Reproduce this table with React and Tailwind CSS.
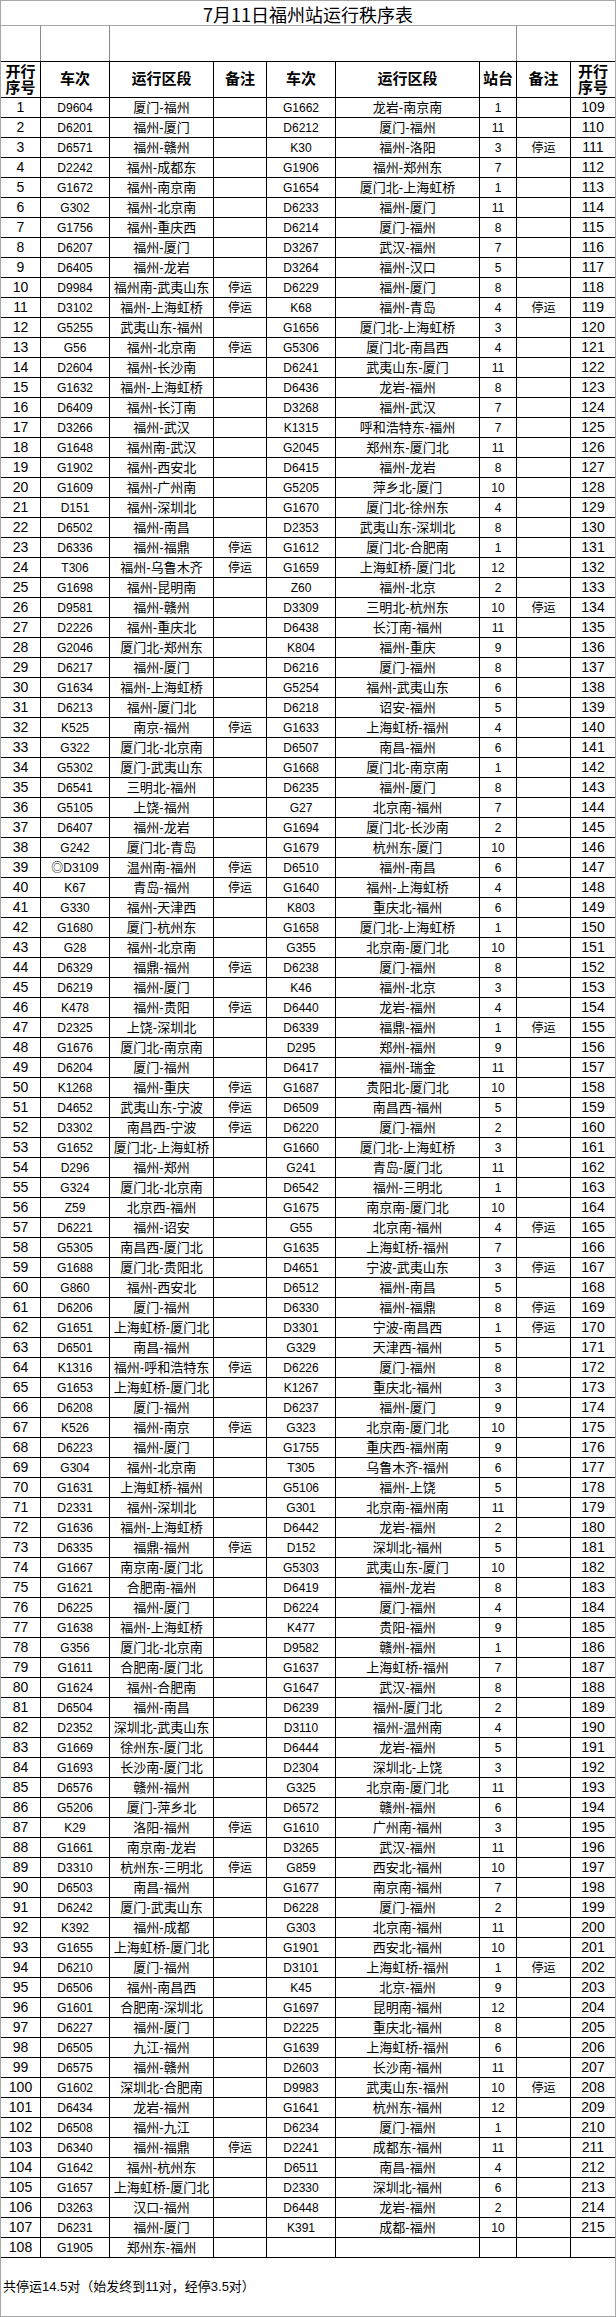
import React from "react";

const raw = `D9604,厦门-福州,,G1662,龙岩-南京南,1,
D6201,福州-厦门,,D6212,厦门-福州,11,
D6571,福州-赣州,,K30,福州-洛阳,3,停运
D2242,福州-成都东,,G1906,福州-郑州东,7,
G1672,福州-南京南,,G1654,厦门北-上海虹桥,1,
G302,福州-北京南,,D6233,福州-厦门,11,
G1756,福州-重庆西,,D6214,厦门-福州,8,
D6207,福州-厦门,,D3267,武汉-福州,7,
D6405,福州-龙岩,,D3264,福州-汉口,5,
D9984,福州南-武夷山东,停运,D6229,福州-厦门,8,
D3102,福州-上海虹桥,停运,K68,福州-青岛,4,停运
G5255,武夷山东-福州,,G1656,厦门北-上海虹桥,3,
G56,福州-北京南,停运,G5306,厦门北-南昌西,4,
D2604,福州-长沙南,,D6241,武夷山东-厦门,11,
G1632,福州-上海虹桥,,D6436,龙岩-福州,8,
D6409,福州-长汀南,,D3268,福州-武汉,7,
D3266,福州-武汉,,K1315,呼和浩特东-福州,7,
G1648,福州南-武汉,,G2045,郑州东-厦门北,11,
G1902,福州-西安北,,D6415,福州-龙岩,8,
G1609,福州-广州南,,G5205,萍乡北-厦门,10,
D151,福州-深圳北,,G1670,厦门北-徐州东,4,
D6502,福州-南昌,,D2353,武夷山东-深圳北,8,
D6336,福州-福鼎,停运,G1612,厦门北-合肥南,1,
T306,福州-乌鲁木齐,停运,G1659,上海虹桥-厦门北,12,
G1698,福州-昆明南,,Z60,福州-北京,2,
D9581,福州-赣州,,D3309,三明北-杭州东,10,停运
D2226,福州-重庆北,,D6438,长汀南-福州,11,
G2046,厦门北-郑州东,,K804,福州-重庆,9,
D6217,福州-厦门,,D6216,厦门-福州,8,
G1634,福州-上海虹桥,,G5254,福州-武夷山东,6,
D6213,福州-厦门北,,D6218,诏安-福州,5,
K525,南京-福州,停运,G1633,上海虹桥-福州,4,
G322,厦门北-北京南,,D6507,南昌-福州,6,
G5302,厦门-武夷山东,,G1668,厦门北-南京南,1,
D6541,三明北-福州,,D6235,福州-厦门,8,
G5105,上饶-福州,,G27,北京南-福州,7,
D6407,福州-龙岩,,G1694,厦门北-长沙南,2,
G242,厦门北-青岛,,G1679,杭州东-厦门,10,
◎D3109,温州南-福州,停运,D6510,福州-南昌,6,
K67,青岛-福州,停运,G1640,福州-上海虹桥,4,
G330,福州-天津西,,K803,重庆北-福州,6,
G1680,厦门-杭州东,,G1658,厦门北-上海虹桥,1,
G28,福州-北京南,,G355,北京南-厦门北,10,
D6329,福鼎-福州,停运,D6238,厦门-福州,8,
D6219,福州-厦门,,K46,福州-北京,3,
K478,福州-贵阳,停运,D6440,龙岩-福州,4,
D2325,上饶-深圳北,,D6339,福鼎-福州,1,停运
G1676,厦门北-南京南,,D295,郑州-福州,9,
D6204,厦门-福州,,D6417,福州-瑞金,11,
K1268,福州-重庆,停运,G1687,贵阳北-厦门北,10,
D4652,武夷山东-宁波,停运,D6509,南昌西-福州,5,
D3302,南昌西-宁波,停运,D6220,厦门-福州,2,
G1652,厦门北-上海虹桥,,G1660,厦门北-上海虹桥,3,
D296,福州-郑州,,G241,青岛-厦门北,11,
G324,厦门北-北京南,,D6542,福州-三明北,1,
Z59,北京西-福州,,G1675,南京南-厦门北,10,
D6221,福州-诏安,,G55,北京南-福州,4,停运
G5305,南昌西-厦门北,,G1635,上海虹桥-福州,7,
G1688,厦门北-贵阳北,,D4651,宁波-武夷山东,3,停运
G860,福州-西安北,,D6512,福州-南昌,5,
D6206,厦门-福州,,D6330,福州-福鼎,8,停运
G1651,上海虹桥-厦门北,,D3301,宁波-南昌西,1,停运
D6501,南昌-福州,,G329,天津西-福州,5,
K1316,福州-呼和浩特东,停运,D6226,厦门-福州,8,
G1653,上海虹桥-厦门北,,K1267,重庆北-福州,3,
D6208,厦门-福州,,D6237,福州-厦门,9,
K526,福州-南京,停运,G323,北京南-厦门北,10,
D6223,福州-厦门,,G1755,重庆西-福州南,9,
G304,福州-北京南,,T305,乌鲁木齐-福州,6,
G1631,上海虹桥-福州,,G5106,福州-上饶,5,
D2331,福州-深圳北,,G301,北京南-福州南,11,
G1636,福州-上海虹桥,,D6442,龙岩-福州,2,
D6335,福鼎-福州,停运,D152,深圳北-福州,5,
G1667,南京南-厦门北,,G5303,武夷山东-厦门,10,
G1621,合肥南-福州,,D6419,福州-龙岩,8,
D6225,福州-厦门,,D6224,厦门-福州,4,
G1638,福州-上海虹桥,,K477,贵阳-福州,9,
G356,厦门北-北京南,,D9582,赣州-福州,1,
G1611,合肥南-厦门北,,G1637,上海虹桥-福州,7,
G1624,福州-合肥南,,G1647,武汉-福州,8,
D6504,福州-南昌,,D6239,福州-厦门北,2,
D2352,深圳北-武夷山东,,D3110,福州-温州南,4,
G1669,徐州东-厦门北,,D6444,龙岩-福州,5,
G1693,长沙南-厦门北,,D2304,深圳北-上饶,3,
D6576,赣州-福州,,G325,北京南-厦门北,11,
G5206,厦门-萍乡北,,D6572,赣州-福州,6,
K29,洛阳-福州,停运,G1610,广州南-福州,3,
G1661,南京南-龙岩,,D3265,武汉-福州,11,
D3310,杭州东-三明北,停运,G859,西安北-福州,10,
D6503,南昌-福州,,G1677,南京南-福州,7,
D6242,厦门-武夷山东,,D6228,厦门-福州,2,
K392,福州-成都,,G303,北京南-福州,11,
G1655,上海虹桥-厦门北,,G1901,西安北-福州,10,
D6210,厦门-福州,,D3101,上海虹桥-福州,1,停运
D6506,福州-南昌西,,K45,北京-福州,9,
G1601,合肥南-深圳北,,G1697,昆明南-福州,12,
D6227,福州-厦门,,D2225,重庆北-福州,8,
D6505,九江-福州,,G1639,上海虹桥-福州,6,
D6575,福州-赣州,,D2603,长沙南-福州,11,
G1602,深圳北-合肥南,,D9983,武夷山东-福州,10,停运
D6434,龙岩-福州,,G1641,杭州东-福州,12,
D6508,福州-九江,,D6234,厦门-福州,1,
D6340,福州-福鼎,停运,D2241,成都东-福州,11,
G1642,福州-杭州东,,D6511,南昌-福州,4,
G1657,上海虹桥-厦门北,,D2330,深圳北-福州,6,
D3263,汉口-福州,,D6448,龙岩-福州,2,
D6231,福州-厦门,,K391,成都-福州,10,
G1905,郑州东-福州,,,,,`;

const rows = raw.split("\n").map((line) => line.split(","));

const cell = "bg-white flex items-center justify-center whitespace-nowrap overflow-hidden";
const head = "bg-white flex items-center justify-center whitespace-nowrap text-[15px] font-bold";

export default function App() {
  return (
    <div className="w-[616px] h-[2317px] bg-white border border-[#a6a6a6] text-black font-['Liberation_Sans','Noto_Sans_CJK_SC',sans-serif] flex flex-col">
      {/* Title */}
      <div className="h-[25px] shrink-0 border-b border-[#a6a6a6] flex items-end justify-center pb-[1px] text-[18px] leading-[20px] font-['Noto_Sans_CJK_SC',sans-serif]">
        7月11日福州站运行秩序表
      </div>

      {/* Blank merged row */}
      <div className="h-[35px] shrink-0 grid grid-cols-[39px_68px_406px_98px] gap-x-px bg-[#8a8a8a]">
        <div className="bg-white" />
        <div className="bg-white" />
        <div className="bg-white" />
        <div className="bg-white" />
      </div>

      {/* Main table */}
      <div className="shrink-0 grid grid-cols-[39px_68px_103px_52px_68px_143px_36px_53px_44px] grid-rows-[35px] auto-rows-[19px] gap-px bg-black py-px">
        <div className={`${head} flex-col leading-[16px]`}>
          <span>开行</span>
          <span>序号</span>
        </div>
        <div className={head}>车次</div>
        <div className={head}>运行区段</div>
        <div className={head}>备注</div>
        <div className={head}>车次</div>
        <div className={head}>运行区段</div>
        <div className={head}>站台</div>
        <div className={head}>备注</div>
        <div className={`${head} flex-col leading-[16px]`}>
          <span>开行</span>
          <span>序号</span>
        </div>

        {rows.map((r, i) => {
          const [t1, route1, note1, t2, route2, plat, note2] = r;
          const hasRight = t2 !== "";
          return (
            <React.Fragment key={i}>
              <div className={`${cell} text-[14px]`}>{i + 1}</div>
              <div className={`${cell} text-[12px]`}>{t1}</div>
              <div className={`${cell} text-[13px]`}>{route1}</div>
              <div className={`${cell} text-[12px]`}>{note1}</div>
              <div className={`${cell} text-[12px]`}>{t2}</div>
              <div className={`${cell} text-[13px]`}>{route2}</div>
              <div className={`${cell} text-[12px]`}>{plat}</div>
              <div className={`${cell} text-[12px]`}>{note2}</div>
              <div className={`${cell} text-[14px]`}>{hasRight ? i + 109 : ""}</div>
            </React.Fragment>
          );
        })}
      </div>

      {/* Footer */}
      <div className="flex-1 flex items-center pl-[2px] text-[13px]">
        共停运14.5对（始发终到11对，经停3.5对）
      </div>
    </div>
  );
}
